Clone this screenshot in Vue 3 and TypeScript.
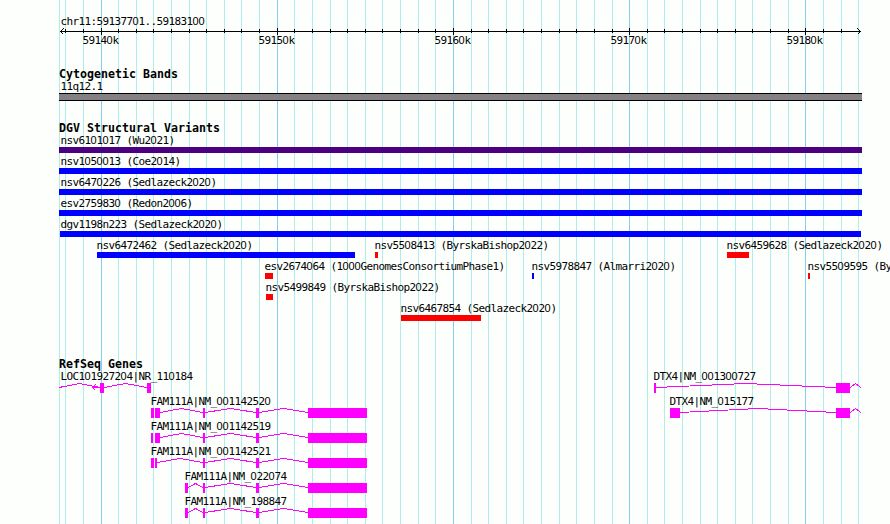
<script setup lang="ts">
interface Segment { text: string; zero: boolean }
interface Variant { label: string; x: number; bar: number; end: number; row: number; color: string }
interface Gene { label: string; x: number; row: number; start?: number; end?: number; exons: [number, number][] }

const majors = [101, 277, 453, 629, 805]
const minors = [
  59, 65, 83, 118, 136, 153, 171, 189, 206, 224, 241, 259, 294, 312, 330, 347, 365, 382, 400, 418,
  435, 471, 488, 506, 523, 541, 559, 576, 594, 612, 647, 664, 682, 700, 717, 735, 752, 770, 788,
  823, 841, 858,
]
const ticks = minors.filter((x) => x > 59 && x < 858)

const texts = [
  { text: 'chr11:59137701..59183100', x: 60, y: 25 },
  { text: '59140k', x: 82, y: 44 },
  { text: '59150k', x: 258, y: 44 },
  { text: '59160k', x: 434, y: 44 },
  { text: '59170k', x: 610, y: 44 },
  { text: '59180k', x: 786, y: 44 },
  { text: '11q12.1', x: 60, y: 90 },
]
const headings = [
  { text: 'Cytogenetic Bands', x: 59, y: 78 },
  { text: 'DGV Structural Variants', x: 59, y: 132 },
  { text: 'RefSeq Genes', x: 59, y: 368 },
]

const blue = '#0000ff'
const red = '#ff0000'
const variants: Variant[] = [
  { label: 'nsv6101017 (Wu2021)', x: 60, bar: 59, end: 862, row: 0, color: '#4b0082' },
  { label: 'nsv1050013 (Coe2014)', x: 60, bar: 59, end: 862, row: 1, color: blue },
  { label: 'nsv6470226 (Sedlazeck2020)', x: 60, bar: 59, end: 862, row: 2, color: blue },
  { label: 'esv2759830 (Redon2006)', x: 60, bar: 59, end: 862, row: 3, color: blue },
  { label: 'dgv1198n223 (Sedlazeck2020)', x: 60, bar: 60, end: 861, row: 4, color: blue },
  { label: 'nsv6472462 (Sedlazeck2020)', x: 96, bar: 97, end: 355, row: 5, color: blue },
  { label: 'nsv5508413 (ByrskaBishop2022)', x: 374, bar: 375, end: 378, row: 5, color: red },
  { label: 'nsv6459628 (Sedlazeck2020)', x: 726, bar: 727, end: 749, row: 5, color: red },
  { label: 'esv2674064 (1000GenomesConsortiumPhase1)', x: 264, bar: 265, end: 273, row: 6, color: red },
  { label: 'nsv5978847 (Almarri2020)', x: 531, bar: 532, end: 534, row: 6, color: blue },
  { label: 'nsv5509595 (By', x: 807, bar: 808, end: 810, row: 6, color: red },
  { label: 'nsv5499849 (ByrskaBishop2022)', x: 265, bar: 266, end: 273, row: 7, color: red },
  { label: 'nsv6467854 (Sedlazeck2020)', x: 400, bar: 401, end: 481, row: 8, color: red },
]

const genes: Gene[] = [
  { label: 'LOC101927204|NR_110184', x: 60, row: 0, start: 59, exons: [[100, 104], [147, 151]] },
  { label: 'DTX4|NM_001300727', x: 653, row: 0, end: 861, exons: [[654, 656], [836, 850]] },
  { label: 'FAM111A|NM_001142520', x: 150, row: 1, exons: [[151, 154], [155, 160], [203, 205], [256, 259], [308, 367]] },
  { label: 'DTX4|NM_015177', x: 669, row: 1, end: 861, exons: [[670, 680], [836, 850]] },
  { label: 'FAM111A|NM_001142519', x: 150, row: 2, exons: [[151, 153], [155, 160], [203, 205], [256, 259], [308, 367]] },
  { label: 'FAM111A|NM_001142521', x: 150, row: 3, exons: [[151, 154], [155, 157], [203, 205], [256, 259], [308, 367]] },
  { label: 'FAM111A|NM_022074', x: 184, row: 4, exons: [[185, 188], [203, 205], [256, 259], [308, 367]] },
  { label: 'FAM111A|NM_198847', x: 184, row: 5, exons: [[185, 188], [203, 205], [256, 259], [308, 367]] },
]

const variantY = (row: number) => 144 + row * 21
const geneY = (row: number) => 380 + row * 25

// Every character sits on a fixed-width cell.
const cells = (text: string, x: number, width: number) =>
  Array.from(text, (_, i) => x + i * width).join(' ')

// Zeros are set in an undotted face.
const segments = (text: string): Segment[] =>
  text.split(/(0+)/).filter(Boolean).map((part) => ({ text: part, zero: part[0] === '0' }))

// Introns join neighbouring exons with a shallow peak.
function introns(gene: Gene): string {
  const top = geneY(gene.row) + 3.5
  const base = top + 4
  const gaps: [number, number][] = []
  if (gene.start !== undefined) gaps.push([gene.start, gene.exons[0][0]])
  for (let i = 1; i < gene.exons.length; i++) {
    const gap: [number, number] = [gene.exons[i - 1][1], gene.exons[i][0]]
    if (gap[1] - gap[0] > 3) gaps.push(gap)
  }
  if (gene.end !== undefined) gaps.push([gene.exons[gene.exons.length - 1][1], gene.end])
  return gaps.map(([a, b]) => `M${a} ${base}L${(a + b) / 2} ${top}L${b} ${base}`).join('')
}
</script>

<template>
  <main class="browser">
    <svg class="tracks" width="890" height="524" viewBox="0 0 890 524">
      <g class="minor"><rect v-for="x in minors" :key="x" :x="x" y="0" width="1" height="524" /></g>
      <g class="major"><rect v-for="x in majors" :key="x" :x="x" y="0" width="1" height="524" /></g>

      <g class="ruler">
        <rect x="60" y="31" width="801" height="1" />
        <rect v-for="x in ticks" :key="x" :x="x" y="29" width="1" height="4" />
        <rect v-for="x in majors" :key="x" :x="x" y="28" width="1" height="7" />
        <path d="M63.5 28.5L60.5 31.5L63.5 34.5M857.5 28.5L860.5 31.5L857.5 34.5" />
      </g>

      <rect class="band-edge" x="59" y="93" width="803" height="8" />
      <rect class="band" x="59" y="94" width="803" height="6" />

      <rect
        v-for="v in variants" :key="v.label"
        :x="v.bar" :y="variantY(v.row) + 3" :width="v.end - v.bar" height="6" :fill="v.color"
      />

      <g v-for="g in genes" :key="g.label" class="gene">
        <path :d="introns(g)" />
        <rect
          v-for="e in g.exons" :key="e[0]"
          :x="e[0]" :y="geneY(g.row) + 3" :width="e[1] - e[0]" height="10"
        />
      </g>
      <g class="gene"><path d="M95.5 384.5L92.5 387.5L95.5 390.5M92 387.5H97" /></g>

      <text v-for="t in texts" :key="t.text" :x="cells(t.text, t.x + 0.4, 6)" :y="t.y"><tspan v-for="(s, i) in segments(t.text)" :key="i" :class="{ zero: s.zero }">{{ s.text }}</tspan></text>
      <text v-for="t in headings" :key="t.text" class="heading" :x="cells(t.text, t.x, 7)" :y="t.y">{{ t.text }}</text>
      <text v-for="v in variants" :key="v.label" :x="cells(v.label, v.x + 0.4, 6)" :y="variantY(v.row)"><tspan v-for="(s, i) in segments(v.label)" :key="i" :class="{ zero: s.zero }">{{ s.text }}</tspan></text>
      <text v-for="g in genes" :key="g.label" :x="cells(g.label, g.x + 0.4, 6)" :y="geneY(g.row)"><tspan v-for="(s, i) in segments(g.label)" :key="i" :class="{ zero: s.zero }">{{ s.text }}</tspan></text>
    </svg>
  </main>
</template>

<style>
body {
  margin: 0;
  background: #fdfffc;
}
</style>

<style scoped>
.browser {
  width: 890px;
  height: 524px;
  overflow: hidden;
  background: #fdfffc;
}
.tracks {
  display: block;
}
rect,
path {
  shape-rendering: crispEdges;
}
.minor {
  fill: #afeeea;
}
.major {
  fill: #87ceeb;
}
.ruler path {
  fill: none;
  stroke: #000;
  stroke-width: 1;
}
.band-edge {
  fill: #000;
}
.band {
  fill: #848084;
}
.gene rect {
  fill: #ff00ff;
}
.gene path {
  fill: none;
  stroke: #ff00ff;
  stroke-width: 1;
}
text {
  font-family: "DejaVu Sans Mono", monospace;
  font-size: 11px;
  fill: #000;
  white-space: pre;
}
.zero {
  font-family: "Liberation Sans", sans-serif;
}
.heading {
  font-size: 11.6px;
  font-weight: 700;
}
</style>
